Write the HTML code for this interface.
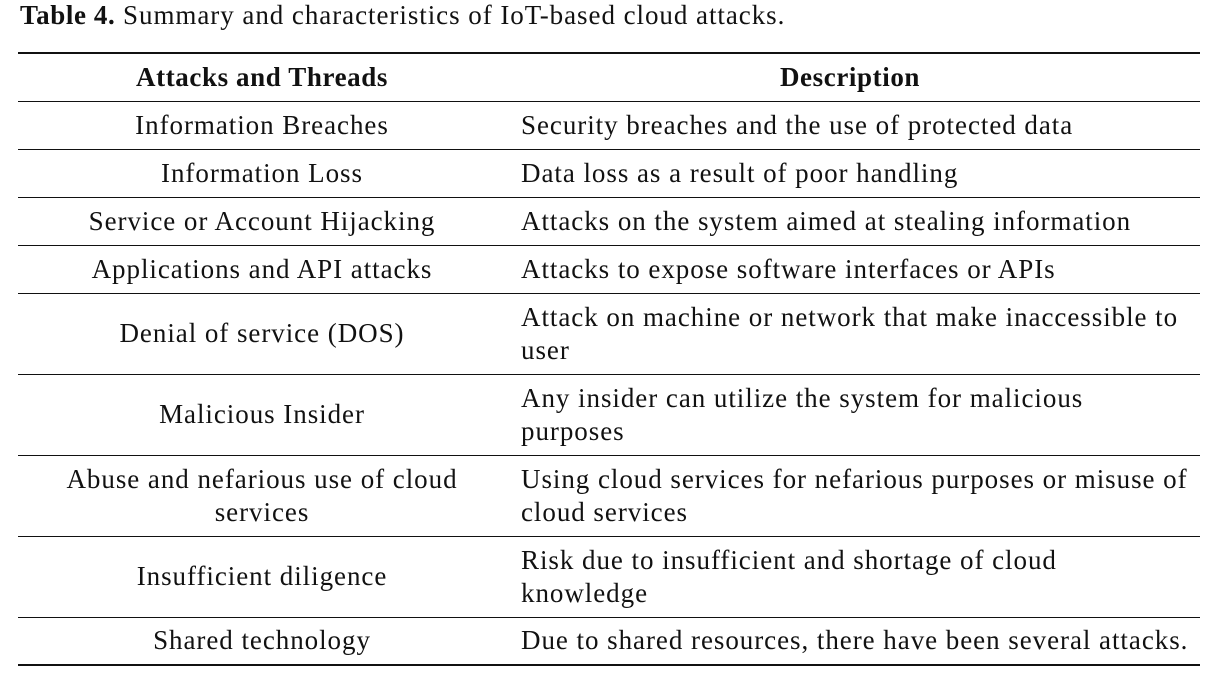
<!DOCTYPE html>
<html><head><meta charset="utf-8"><style>
body{margin:0;width:1230px;height:688px;background:#fff;position:relative;font-family:"Liberation Serif",serif;color:#111;overflow:hidden}
.t{position:absolute;font-size:27px;letter-spacing:0.95px;line-height:33px;white-space:nowrap}
.c{left:12px;width:500px;text-align:center}
.d{left:521px}
.h{position:absolute;left:18px;width:1182px;background:#111}
b{letter-spacing:0.6px}
</style></head><body>
<div class="t" style="left:20px;top:-1px;"><b>Table 4.</b> Summary and characteristics of IoT-based cloud attacks.</div>
<div class="h" style="top:52px;height:2px"></div>
<div class="h" style="top:101px;height:1px"></div>
<div class="h" style="top:149px;height:1px"></div>
<div class="h" style="top:197px;height:1px"></div>
<div class="h" style="top:245px;height:1px"></div>
<div class="h" style="top:293px;height:1px"></div>
<div class="h" style="top:374px;height:1px"></div>
<div class="h" style="top:455px;height:1px"></div>
<div class="h" style="top:536px;height:1px"></div>
<div class="h" style="top:617px;height:1px"></div>
<div class="h" style="top:664px;height:2px"></div>

<div class="t c" style="top:61px"><b>Attacks and Threads</b></div>
<div class="t" style="left:700px;width:300px;text-align:center;top:61px"><b>Description</b></div>

<div class="t c" style="top:109px">Information Breaches</div>
<div class="t d" style="top:109px">Security breaches and the use of protected data</div>
<div class="t c" style="top:157px">Information Loss</div>
<div class="t d" style="top:157px">Data loss as a result of poor handling</div>
<div class="t c" style="top:205px">Service or Account Hijacking</div>
<div class="t d" style="top:205px">Attacks on the system aimed at stealing information</div>
<div class="t c" style="top:253px">Applications and API attacks</div>
<div class="t d" style="top:253px">Attacks to expose software interfaces or APIs</div>
<div class="t c" style="top:317px">Denial of service (DOS)</div>
<div class="t d" style="top:301px">Attack on machine or network that make inaccessible to<br>user</div>
<div class="t c" style="top:398px">Malicious Insider</div>
<div class="t d" style="top:382px">Any insider can utilize the system for malicious<br>purposes</div>
<div class="t c" style="top:463px">Abuse and nefarious use of cloud<br>services</div>
<div class="t d" style="top:463px">Using cloud services for nefarious purposes or misuse of<br>cloud services</div>
<div class="t c" style="top:560px">Insufficient diligence</div>
<div class="t d" style="top:544px">Risk due to insufficient and shortage of cloud<br>knowledge</div>
<div class="t c" style="top:624px">Shared technology</div>
<div class="t d" style="top:624px">Due to shared resources, there have been several attacks.</div>
</body></html>
